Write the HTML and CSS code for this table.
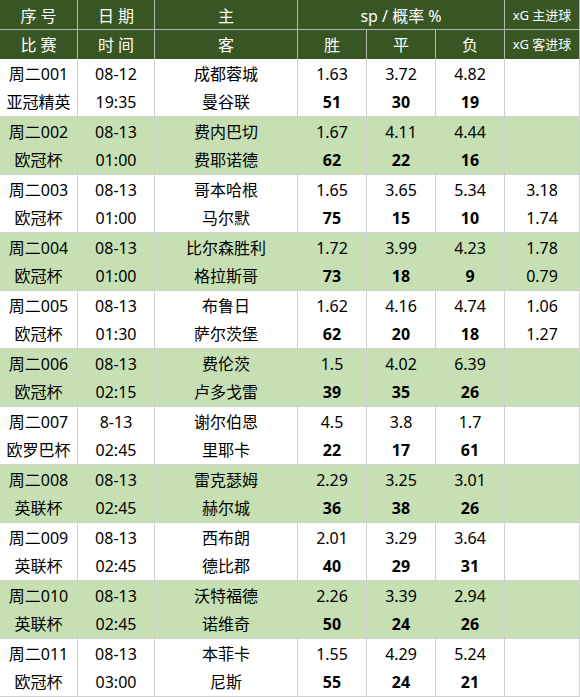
FILE: index.html
```html
<!DOCTYPE html>
<html lang="zh-CN">
<head>
<meta charset="utf-8">
<title>赛程</title>
<link rel="stylesheet" href="styles.css">
</head>
<body>
<div class="sheet">
  <div class="head">
    <div class="h r1">序 号</div>
    <div class="h r1">日 期</div>
    <div class="h r1">主</div>
    <div class="h r1 span3">sp / 概率 %</div>
    <div class="h r1 small">xG 主进球</div>
    <div class="h">比 赛</div>
    <div class="h">时 间</div>
    <div class="h">客</div>
    <div class="h">胜</div>
    <div class="h">平</div>
    <div class="h">负</div>
    <div class="h small">xG 客进球</div>
  </div>

  <div class="group">
    <div>周二001</div><div>08-12</div><div>成都蓉城</div><div>1.63</div><div>3.72</div><div>4.82</div><div></div>
    <div>亚冠精英</div><div>19:35</div><div>曼谷联</div><div class="b">51</div><div class="b">30</div><div class="b">19</div><div></div>
  </div>
  <div class="group green">
    <div>周二002</div><div>08-13</div><div>费内巴切</div><div>1.67</div><div>4.11</div><div>4.44</div><div></div>
    <div>欧冠杯</div><div>01:00</div><div>费耶诺德</div><div class="b">62</div><div class="b">22</div><div class="b">16</div><div></div>
  </div>
  <div class="group">
    <div>周二003</div><div>08-13</div><div>哥本哈根</div><div>1.65</div><div>3.65</div><div>5.34</div><div>3.18</div>
    <div>欧冠杯</div><div>01:00</div><div>马尔默</div><div class="b">75</div><div class="b">15</div><div class="b">10</div><div>1.74</div>
  </div>
  <div class="group green">
    <div>周二004</div><div>08-13</div><div>比尔森胜利</div><div>1.72</div><div>3.99</div><div>4.23</div><div>1.78</div>
    <div>欧冠杯</div><div>01:00</div><div>格拉斯哥</div><div class="b">73</div><div class="b">18</div><div class="b">9</div><div>0.79</div>
  </div>
  <div class="group">
    <div>周二005</div><div>08-13</div><div>布鲁日</div><div>1.62</div><div>4.16</div><div>4.74</div><div>1.06</div>
    <div>欧冠杯</div><div>01:30</div><div>萨尔茨堡</div><div class="b">62</div><div class="b">20</div><div class="b">18</div><div>1.27</div>
  </div>
  <div class="group green">
    <div>周二006</div><div>08-13</div><div>费伦茨</div><div>1.5</div><div>4.02</div><div>6.39</div><div></div>
    <div>欧冠杯</div><div>02:15</div><div>卢多戈雷</div><div class="b">39</div><div class="b">35</div><div class="b">26</div><div></div>
  </div>
  <div class="group">
    <div>周二007</div><div>8-13</div><div>谢尔伯恩</div><div>4.5</div><div>3.8</div><div>1.7</div><div></div>
    <div>欧罗巴杯</div><div>02:45</div><div>里耶卡</div><div class="b">22</div><div class="b">17</div><div class="b">61</div><div></div>
  </div>
  <div class="group green">
    <div>周二008</div><div>08-13</div><div>雷克瑟姆</div><div>2.29</div><div>3.25</div><div>3.01</div><div></div>
    <div>英联杯</div><div>02:45</div><div>赫尔城</div><div class="b">36</div><div class="b">38</div><div class="b">26</div><div></div>
  </div>
  <div class="group">
    <div>周二009</div><div>08-13</div><div>西布朗</div><div>2.01</div><div>3.29</div><div>3.64</div><div></div>
    <div>英联杯</div><div>02:45</div><div>德比郡</div><div class="b">40</div><div class="b">29</div><div class="b">31</div><div></div>
  </div>
  <div class="group green">
    <div>周二010</div><div>08-13</div><div>沃特福德</div><div>2.26</div><div>3.39</div><div>2.94</div><div></div>
    <div>英联杯</div><div>02:45</div><div>诺维奇</div><div class="b">50</div><div class="b">24</div><div class="b">26</div><div></div>
  </div>
  <div class="group">
    <div>周二011</div><div>08-13</div><div>本菲卡</div><div>1.55</div><div>4.29</div><div>5.24</div><div></div>
    <div>欧冠杯</div><div>03:00</div><div>尼斯</div><div class="b">55</div><div class="b">24</div><div class="b">21</div><div></div>
  </div>
</div>
</body>
</html>
```

FILE: styles.css
```css
* {
  box-sizing: border-box;
}

html, body {
  margin: 0;
  padding: 0;
  background: #ffffff;
}

body {
  font-family: "Noto Sans", "Noto Sans CJK SC", sans-serif;
  font-size: 16px;
  color: #000000;
}

.sheet {
  width: 580px;
}

.head,
.group {
  display: grid;
  grid-template-columns: 78px 77px 143px 69px 69px 69px 75px;
}

.head {
  background: #375623;
  color: #ffffff;
  grid-template-rows: 30px 29px;
}

.h {
  display: flex;
  align-items: center;
  justify-content: center;
  border-right: 1px solid #b4b4b4;
  line-height: 1;
  white-space: pre;
}

.h.r1 {
  border-bottom: 1px solid #b4b4b4;
  padding-top: 2px;
}

.span3 {
  grid-column: span 3;
}

.small {
  font-size: 13px;
}

.group {
  grid-template-rows: 29px 28px;
  border-bottom: 1px solid #d0d0d0;
  background: #ffffff;
}

.group.green {
  background: #c6e0b4;
}

.group > div {
  display: flex;
  align-items: center;
  justify-content: center;
  border-right: 1px solid #d0d0d0;
  line-height: 1;
  white-space: nowrap;
}

.group > div.b {
  font-weight: 700;
}
```
